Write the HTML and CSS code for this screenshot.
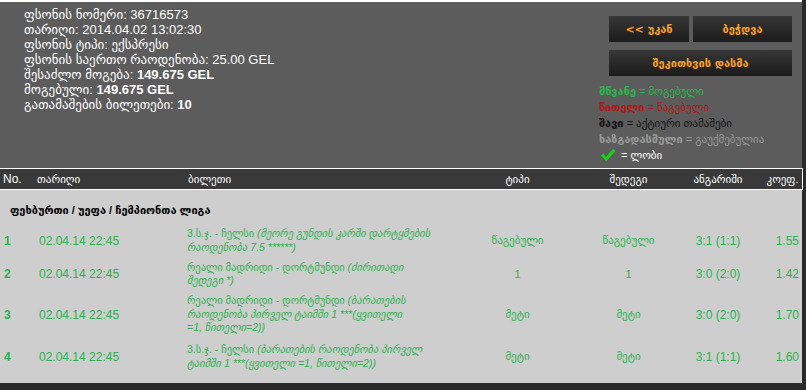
FILE: index.html
```html
<!DOCTYPE html>
<html lang="ka">
  <head>
    <meta charset="UTF-8" />
    <meta name="viewport" content="width=device-width, initial-scale=1.0" />
    <title>ფსონის დეტალები</title>
    <link rel="stylesheet" href="styles.css">
  </head>
  <body>
    <div class="page">
      <div class="summary">
        <div class="info">
          <div>ფსონის ნომერი: 36716573</div>
          <div>თარიღი: 2014.04.02 13:02:30</div>
          <div>ფსონის ტიპი: ექსპრესი</div>
          <div>ფსონის საერთო რაოდენობა: 25.00 GEL</div>
          <div>შესაძლო მოგება: <b>149.675 GEL</b></div>
          <div>მოგებული: <b>149.675 GEL</b></div>
          <div>გათამაშების ბილეთები: <b>10</b></div>
        </div>

        <div class="side">
          <div class="actions">
            <button class="btn btn-back">&lt;&lt; უკან</button>
            <button class="btn btn-print">ბეჭდვა</button>
            <button class="btn btn-wide">შეკითხვის დასმა</button>
          </div>
          <div class="legend">
            <div class="won"><b>მწვანე</b> = მოგებული</div>
            <div class="lost"><b>წითელი</b> = წაგებული</div>
            <div class="active"><b>შავი</b> = აქტიური თამაშები</div>
            <div class="void"><b>ხაზგადასმული</b> = გაუქმებულია</div>
            <div class="lobby">
              <svg class="check" width="16" height="14" viewBox="0 0 16 14">
                <path d="M1 7.5 L3.5 5.5 L6 9 L13 1 L15.5 3 L6.2 13.2 Z" fill="#14d314"></path>
              </svg>
              = ლობი
            </div>
          </div>
        </div>
      </div>

      <div class="board">
        <table class="tickets">
          <thead>
            <tr>
              <th class="col-no">No.</th>
              <th class="col-date">თარიღი</th>
              <th class="col-ticket">ბილეთი</th>
              <th class="col-type">ტიპი</th>
              <th class="col-result">შედეგი</th>
              <th class="col-score">ანგარიში</th>
              <th class="col-odds">კოეფ.</th>
            </tr>
          </thead>
          <tbody>
            <tr class="category">
              <td colspan="7">ფეხბურთი / უეფა / ჩემპიონთა ლიგა</td>
            </tr>
            <tr>
              <td class="col-no">1</td>
              <td class="col-date">02.04.14 22:45</td>
              <td class="col-ticket">3.ს.ჯ. - ჩელსი <i>(მეორე გუნდის კარში დარტყმების<br>რაოდენობა 7.5 ******)</i></td>
              <td class="col-type">წაგებული</td>
              <td class="col-result">წაგებული</td>
              <td class="col-score">3:1 (1:1)</td>
              <td class="col-odds">1.55</td>
            </tr>
            <tr>
              <td class="col-no">2</td>
              <td class="col-date">02.04.14 22:45</td>
              <td class="col-ticket">რეალი მადრიდი - დორტმუნდი <i>(ძირითადი<br>შედეგი *)</i></td>
              <td class="col-type">1</td>
              <td class="col-result">1</td>
              <td class="col-score">3:0 (2:0)</td>
              <td class="col-odds">1.42</td>
            </tr>
            <tr>
              <td class="col-no">3</td>
              <td class="col-date">02.04.14 22:45</td>
              <td class="col-ticket">რეალი მადრიდი - დორტმუნდი <i>(ბარათების<br>რაოდენობა პირველ ტაიმში 1 ***(ყვითელი<br>=1, წითელი=2))</i></td>
              <td class="col-type">მეტი</td>
              <td class="col-result">მეტი</td>
              <td class="col-score">3:0 (2:0)</td>
              <td class="col-odds">1.70</td>
            </tr>
            <tr>
              <td class="col-no">4</td>
              <td class="col-date">02.04.14 22:45</td>
              <td class="col-ticket">3.ს.ჯ. - ჩელსი <i>(ბარათების რაოდენობა პირველ<br>ტაიმში 1 ***(ყვითელი =1, წითელი=2))</i></td>
              <td class="col-type">მეტი</td>
              <td class="col-result">მეტი</td>
              <td class="col-score">3:1 (1:1)</td>
              <td class="col-odds">1.60</td>
            </tr>
          </tbody>
        </table>
      </div>
    </div>
  </body>
</html>
```

FILE: styles.css
```css
body {
  margin: 0;
  background-color: #2a2a2a;
  font-family: "Liberation Sans", "DejaVu Sans", sans-serif;
}

.page {
  width: 802px;
}

.summary {
  display: flex;
  height: 166px;
  background-color: #5c5c5c;
  border-top: 2px solid #ffffff;
}

.info {
  padding: 5px 0 0 24px;
  color: #ffffff;
  font-size: 13px;
  line-height: 15px;
}

.side {
  margin-left: auto;
  width: 203px;
}

.actions {
  display: flex;
  flex-wrap: wrap;
  gap: 8px 4px;
  padding: 14px 10px 0 10px;
}

.btn {
  height: 26px;
  border: none;
  border-radius: 0;
  background: linear-gradient(#373737, #1b1b1b);
  color: #ffa21e;
  font-family: "DejaVu Sans", sans-serif;
  font-size: 11px;
  font-weight: bold;
  padding: 0;
  cursor: pointer;
}

.btn-back {
  width: 80px;
}

.btn-print {
  width: 99px;
}

.btn-wide {
  width: 183px;
}

.legend {
  margin-top: 7px;
  font-size: 11px;
  line-height: 16px;
}

.legend .won {
  color: #27b94a;
}

.legend .lost {
  color: #b51515;
}

.legend .active {
  color: #111111;
}

.legend .void {
  color: #9a9a9a;
}

.legend .lobby {
  display: flex;
  align-items: center;
  gap: 5px;
  color: #ffffff;
}

.check {
  margin-left: 1px;
}

.board {
  background-color: #cecece;
  padding-bottom: 10px;
}

.tickets {
  width: 802px;
  border-collapse: collapse;
  table-layout: fixed;
}

.tickets th,
.tickets td {
  box-sizing: border-box;
}

.tickets thead tr {
  background-color: #393939;
  border: 1px solid #ffffff;
  border-left: none;
}

.tickets th {
  height: 21px;
  padding: 0;
  color: #ffffff;
  font-size: 11px;
  font-weight: normal;
  text-align: left;
}

.tickets td {
  padding: 3.25px 0;
  color: #2bb24c;
  font-size: 11px;
  vertical-align: middle;
}

.tickets .col-no {
  width: 35px;
  padding-left: 4px;
}

.tickets th.col-no {
  padding-left: 3px;
  font-size: 12px;
}

.tickets td.col-no {
  font-weight: bold;
  font-size: 12px;
}

.tickets .col-date {
  width: 150px;
  padding-left: 2px;
}

.tickets td.col-date {
  font-size: 12px;
  padding-left: 4px;
}

.tickets .col-ticket {
  width: 285px;
  padding-left: 3px;
}

.tickets td.col-ticket {
  padding-left: 2px;
  font-size: 10.5px;
  line-height: 13.5px;
}

.tickets .col-type {
  width: 110px;
  padding-right: 15px;
  text-align: center;
}

.tickets .col-result {
  width: 97px;
  text-align: center;
}

.tickets .col-score {
  width: 82px;
  text-align: center;
}

.tickets td.col-score,
.tickets td.col-odds {
  font-size: 12px;
}

.tickets .col-odds {
  width: 43px;
  padding-right: 3px;
  text-align: right;
}

.tickets tbody tr:last-child td {
  padding-top: 5px;
}

.tickets .category td {
  padding: 13px 10px 7px;
  color: #000000;
  font-size: 11px;
  font-weight: bold;
  line-height: 14px;
}
```
